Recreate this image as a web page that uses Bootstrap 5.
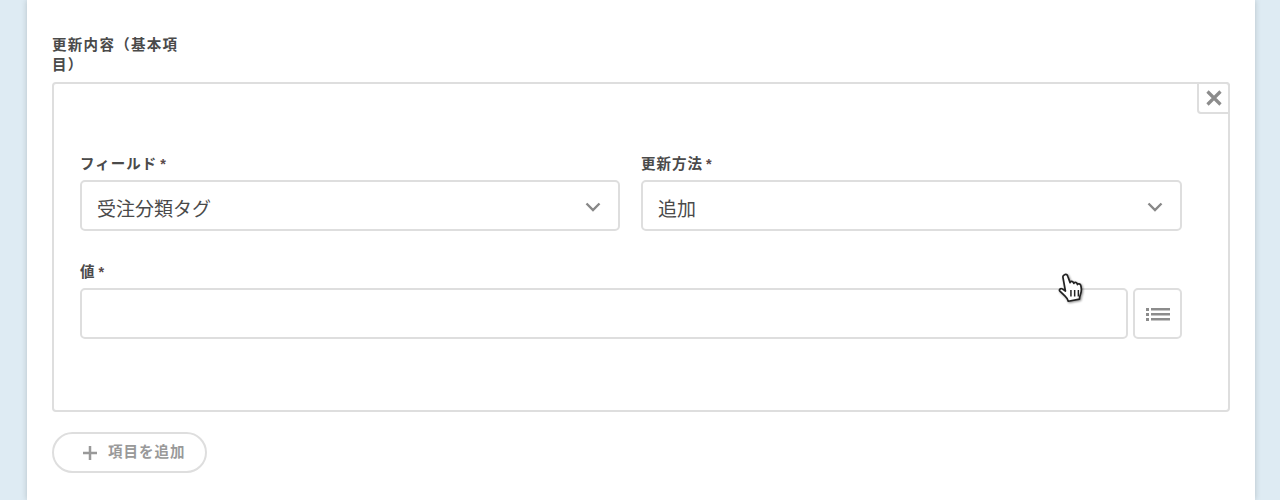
<!DOCTYPE html>
<html lang="ja">
<head>
    <meta charset="UTF-8">
    <meta name="viewport" content="width=device-width, initial-scale=1.0">
    <title>更新内容</title>
    <link href="https://cdn.jsdelivr.net/npm/bootstrap@5.3.0/dist/css/bootstrap.min.css" rel="stylesheet">
    <style>
        body {
            background: #deebf3;
            font-family: "Liberation Sans", "Noto Sans CJK JP", sans-serif;
            color: #4a4a4a;
            height: 500px;
            overflow: hidden;
        }

        .sheet {
            width: 1228px;
            height: 500px;
            margin-left: 27px;
            padding: 35px 25px 0;
            background: #fff;
            box-shadow: 0 0 6px rgba(0, 0, 0, 0.18);
        }

        .group-title {
            width: 135px;
            height: 47px;
            margin: 0;
            font-size: 14.5px;
            line-height: 20px;
            font-weight: 700;
            letter-spacing: 1.3px;
            color: #4a4a4a;
        }

        .repeat-box {
            position: relative;
            height: 330px;
            padding: 71px 46px 0 26px;
            border: 2px solid #dedede;
            border-radius: 4px;
        }

        .remove-btn {
            position: absolute;
            top: -2px;
            right: -2px;
            width: 33px;
            height: 32px;
            padding: 0;
            background: #fff;
            border: 2px solid #dedede;
            border-radius: 0 4px 0 4px;
        }

        .field-row {
            display: grid;
            grid-template-columns: 540px 541px;
            column-gap: 21px;
        }

        .field-label {
            display: block;
            height: 19px;
            margin: 0 0 6px;
            font-size: 14.5px;
            line-height: 19px;
            font-weight: 700;
            letter-spacing: 1px;
            color: #4a4a4a;
        }

        .req {
            margin-left: 3px;
            color: #5a4a4a;
            letter-spacing: 0;
        }

        .form-select.pick,
        .form-control.entry {
            height: 51px;
            padding: 10px 15px 0;
            font-size: 19px;
            color: #4a4a4a;
            border: 2px solid #dedede;
            border-radius: 5px;
            box-shadow: none;
        }

        .form-select.pick {
            background-image: url("data:image/svg+xml,%3Csvg xmlns='http://www.w3.org/2000/svg' viewBox='0 0 16 10'%3E%3Cpath d='M1.5 1.5 8 8l6.500-6.500' fill='none' stroke='%23888' stroke-width='2.4'/%3E%3C/svg%3E");
            background-position: right 17px top 20px;
            background-size: 16px 10px;
        }

        .value-block {
            margin-top: 32px;
        }

        .value-line {
            width: 1102px;
        }

        .list-btn {
            flex: 0 0 49px;
            height: 51px;
            margin-left: 1px;
            padding: 0;
            background: #fff;
            border: 2px solid #dedede;
            border-radius: 5px;
        }

        .add-btn {
            display: flex;
            align-items: center;
            width: 155px;
            height: 41px;
            margin-top: 20px;
            padding: 0 0 0 28px;
            font-size: 14.5px;
            font-weight: 700;
            letter-spacing: 1px;
            color: #999;
            background: #fff;
            border: 2px solid #dedede;
            border-radius: 21px;
        }

        .add-btn svg {
            margin-right: 10px;
        }

        .hand {
            position: absolute;
            left: 1057px;
            top: 272px;
            filter: drop-shadow(1px 1px 1px rgba(0, 0, 0, 0.45));
        }
    </style>
</head>
<body>
    <div class="sheet">
        <p class="group-title">更新内容（基本項目）</p>
        <div class="repeat-box">
            <button type="button" class="remove-btn d-flex align-items-center justify-content-center" aria-label="削除">
                <svg width="16" height="16" viewBox="0 0 16 16"><path d="M1.500 1.500l13 13M14.500 1.500l-13 13" stroke="#8c8c8c" stroke-width="3.200" fill="none"/></svg>
            </button>
            <div class="field-row">
                <div>
                    <label class="field-label">フィールド<span class="req">*</span></label>
                    <select class="form-select pick"><option>受注分類タグ</option></select>
                </div>
                <div>
                    <label class="field-label">更新方法<span class="req">*</span></label>
                    <select class="form-select pick"><option>追加</option></select>
                </div>
            </div>
            <div class="value-block">
                <label class="field-label">値<span class="req">*</span></label>
                <div class="value-line d-flex gap-1">
                    <input type="text" class="form-control entry flex-grow-1">
                    <button type="button" class="list-btn d-flex align-items-center justify-content-center" aria-label="一覧">
                        <svg width="24" height="14" viewBox="0 0 24 14" fill="#8c8c8c">
                            <rect x="0" y="1" width="3" height="3"/><rect x="0" y="6" width="3" height="3"/><rect x="0" y="11" width="3" height="3"/>
                            <rect x="5" y="1" width="19" height="2.500"/><rect x="5" y="6" width="19" height="2.500"/><rect x="5" y="11" width="19" height="2.500"/>
                        </svg>
                    </button>
                </div>
            </div>
        </div>
        <button type="button" class="add-btn">
            <svg width="16" height="16" viewBox="0 0 16 16"><path d="M8 1v14M1 8h14" stroke="#999" stroke-width="2.500" fill="none"/></svg>項目を追加
        </button>
    </div>
    <svg class="hand" width="30" height="34" viewBox="0 0 28 32">
        <path d="M7 2.500c1.300-.8 2.500 0 3 1.500l2.200 6c.3-1.400 2.400-1.600 3-.2l.6 1c.2-1.300 2.300-1.500 2.900-.1l.5 1.100c.4-1 2.400-1 2.900.4 1 3 .9 6.500-.3 9.500-.5 1.300-.7 2.500-.8 3.800l-10.500 2c-.5-2-1.600-3.500-3.200-5L2.600 18c-1.100-1.300.6-3.100 2.200-2.100l3 2L5.500 5c-.3-1.100.5-2 1.500-2.500z" fill="#fff" stroke="#222" stroke-width="1.600" stroke-linejoin="round"/>
        <path d="M13 17v6M16.500 17v6M20 17v6" stroke="#222" stroke-width="1.400"/>
    </svg>
</body>
</html>
